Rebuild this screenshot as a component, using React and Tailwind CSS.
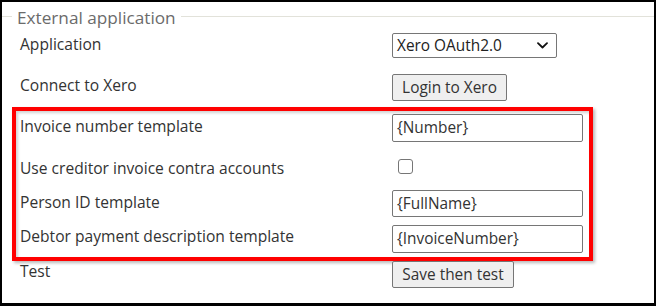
import React from "react";

const font = { fontFamily: '"Open Sans", "Noto Sans", sans-serif' };

function Label({ children, pt }) {
  return (
    <div className={`w-[372px] shrink-0 text-[15.6px] leading-[20px] text-[#333333] ${pt}`}>
      {children}
    </div>
  );
}

function TextInput({ value, h }) {
  return (
    <div
      className={`w-[191px] ${h} box-border border border-[#767676] rounded-[2px] bg-white pl-[4px] flex items-center text-[15.4px] text-[#333333] leading-[20px]`}
    >
      {value}
    </div>
  );
}

function Button({ children, w }) {
  return (
    <div
      className={`${w} h-[27px] box-border border border-[#767676] rounded-[2px] bg-[#efefef] flex items-center justify-center text-[15.4px] text-[#333333] leading-[20px]`}
    >
      {children}
    </div>
  );
}

export default function App() {
  return (
    <div
      className="w-[656px] h-[306px] box-border border-t-2 border-l-2 border-r-2 border-b-[3px] border-black bg-white overflow-hidden"
      style={font}
    >
      {/* fieldset legend */}
      <div className="flex items-start mt-[4px] h-[24px]">
        <div className="w-[10px] h-px mt-[10px] bg-[#e2e2da]" />
        <div className="px-[5px] text-[17.2px] leading-[24px] text-[#6b6b6b]">External application</div>
        <div className="flex-1 h-px mt-[10px] bg-[#e2e2da]" />
      </div>

      {/* Application */}
      <div className="flex items-start pl-[18px] mt-[3px] h-[25px]">
        <Label pt="pt-[1px]">Application</Label>
        <div className="w-[165px] h-[25px] box-border border border-[#767676] rounded-[2px] bg-white flex items-center justify-between pl-[4px] pr-[8px] text-[15.4px] leading-[20px] text-[#222222]">
          <span>Xero OAuth2.0</span>
          <svg width="11" height="7" viewBox="0 0 11 7" fill="none">
            <path d="M1 1.2 L5.5 5.5 L10 1.2" stroke="#111" strokeWidth="1.8" strokeLinecap="round" strokeLinejoin="round" />
          </svg>
        </div>
      </div>

      {/* Connect to Xero */}
      <div className="flex items-start pl-[18px] mt-[16px] h-[27px]">
        <Label pt="pt-[1px]">Connect to Xero</Label>
        <Button w="w-[115px]">Login to Xero</Button>
      </div>

      {/* highlighted group */}
      <div className="ml-[10px] mt-[6px] w-[581px] box-border border-4 border-[#ff0000] pt-[3px] pb-[4px] pl-[4px] shadow-[2px_2px_3px_rgba(0,0,0,0.28),inset_2px_2px_3px_rgba(0,0,0,0.18)]">
        <div className="flex items-start h-[28px]">
          <Label pt="pt-[2px]">Invoice number template</Label>
          <TextInput value="{Number}" h="h-[28px]" />
        </div>
        <div className="flex items-start mt-[14px] h-[22px]">
          <Label pt="pt-[2px]">Use creditor invoice contra accounts</Label>
          <div className="ml-[6px] mt-[3px] w-[15px] h-[15px] box-border border-[1.5px] border-[#767676] rounded-[3px] bg-white" />
        </div>
        <div className="flex items-start mt-[12px] h-[27px]">
          <Label pt="pt-[2px]">Person ID template</Label>
          <TextInput value="{FullName}" h="h-[27px]" />
        </div>
        <div className="flex items-start mt-[8px] h-[28px]">
          <Label pt="pt-[1px]">Debtor payment description template</Label>
          <TextInput value="{InvoiceNumber}" h="h-[28px]" />
        </div>
      </div>

      {/* Test */}
      <div className="flex items-start pl-[18px] h-[27px]">
        <Label pt="pt-0">Test</Label>
        <Button w="w-[122px]">Save then test</Button>
      </div>
    </div>
  );
}
